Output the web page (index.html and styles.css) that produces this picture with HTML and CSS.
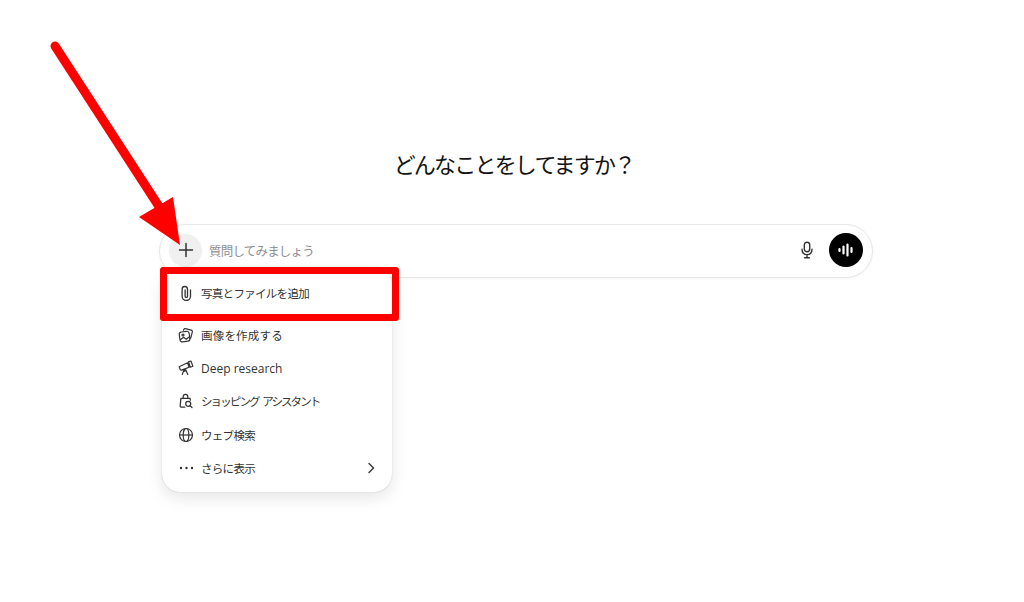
FILE: index.html
```html
<!DOCTYPE html>
<html lang="ja">
<head>
<meta charset="utf-8">
<title>ChatGPT</title>
<link rel="stylesheet" href="styles.css">
</head>
<body>
<main class="page">
  <h1 class="title">どんなことをしてますか？</h1>
  <div class="composer-wrap">
    <div class="composer">
      <button class="plus" aria-label="追加">
        <svg width="16" height="16" viewBox="0 0 16 16"><path d="M8 1.500v13M1.500 8h13" stroke="#333" stroke-width="1.5" fill="none" stroke-linecap="round"/></svg>
      </button>
      <span class="placeholder">質問してみましょう</span>
      <svg class="mic" width="16" height="18" viewBox="0 0 16 18" fill="none" stroke="#333" stroke-width="1.4" stroke-linecap="round"><rect x="5.300" y="1.200" width="5.400" height="9.600" rx="2.700"/><path d="M3 8.200c0 3.200 2 5.400 5 5.400s5-2.200 5-5.400M8 13.600v3M5.600 16.700h4.800"/></svg>
      <button class="voice" aria-label="音声">
        <svg width="18" height="14" viewBox="0 0 18 14" stroke="#fff" stroke-width="2.200" stroke-linecap="round"><path d="M2.500 6v2M6.500 3.500v7M10.500 1.500v11M14.500 5v4"/></svg>
      </button>
    </div>
    <nav class="menu">
      <a class="item item-first">
        <svg class="ico" viewBox="0 0 16 16" fill="none" stroke="#333" stroke-width="1.300" stroke-linecap="round"><path d="M12.500 5v6.300a4.200 4.200 0 0 1-8.400 0V4.200a2.700 2.700 0 0 1 5.400 0v7a1.200 1.200 0 0 1-2.400 0V5"/></svg>
        <span class="t-tight">写真とファイルを追加</span>
      </a>
      <a class="item">
        <svg class="ico" viewBox="0 0 16 16" fill="none" stroke="#333" stroke-width="1.200" stroke-linejoin="round" stroke-linecap="round"><rect x="1.600" y="4.600" width="10" height="10" rx="2.400" transform="rotate(-8 6.600 9.600)"/><path d="M5.400 3.300l.4-.9c.3-.6.9-.9 1.500-.7l6 1.500c.8.2 1.200.9 1 1.600l-1.300 5.500c-.2.700-.7 1.100-1.300 1.100"/><circle cx="5" cy="8" r="1"/><path d="M2.600 12.500l3-2.300 2.600 2 2.500-2"/></svg>
        <span class="t-wide">画像を作成する</span>
      </a>
      <a class="item">
        <svg class="ico" viewBox="0 0 16 16" fill="none" stroke="#333" stroke-width="1.200" stroke-linejoin="round" stroke-linecap="round"><path d="M1.200 6.800l8.400-4 1.500 4.400-7.600 2.900c-.6.200-1 0-1.200-.4zM10.500 1.900l2.400-.9 2 5.200-2.600 1-1.800-5.300zM6.400 9.100l-2.200 5.400M7.300 8.800l2.500 5.600M6.800 9.500v2"/></svg>
        <span class="latin">Deep research</span>
      </a>
      <a class="item">
        <svg class="ico" viewBox="0 0 16 16" fill="none" stroke="#333" stroke-width="1.250" stroke-linecap="round" stroke-linejoin="round"><path d="M6.800 14.200H3.600c-.9 0-1.500-.7-1.400-1.600l.7-7.200h9.200l.2 1.800M5.200 5.400V3.600a2.300 2.300 0 0 1 4.600 0v1.800"/><circle cx="10.200" cy="10.800" r="2.500"/><path d="M12.100 12.700l1.900 1.800"/></svg>
        <span class="t-shop">ショッピング アシスタント</span>
      </a>
      <a class="item">
        <svg class="ico" viewBox="0 0 16 16" fill="none" stroke="#333" stroke-width="1.200"><circle cx="8" cy="8" r="6.500"/><ellipse cx="8" cy="8" rx="2.800" ry="6.500"/><path d="M1.500 8h13"/></svg>
        <span class="t-tight">ウェブ検索</span>
      </a>
      <a class="item">
        <svg class="ico" viewBox="0 0 16 16" fill="#333"><circle cx="3" cy="8" r="1.200"/><circle cx="8.500" cy="8" r="1.200"/><circle cx="14" cy="8" r="1.200"/></svg>
        <span class="grow t-tight">さらに表示</span>
        <svg class="chev" width="8" height="12" viewBox="0 0 8 12" fill="none" stroke="#333" stroke-width="1.400" stroke-linecap="round" stroke-linejoin="round"><path d="M2 1.500L6.500 6 2 10.500"/></svg>
      </a>
    </nav>
    <div class="highlight"></div>
  </div>
</main>
<svg class="arrow" width="200" height="260" viewBox="0 0 200 260">
  <path d="M55 46L160 208" stroke="#fe0000" stroke-width="9" stroke-linecap="round" fill="none"/>
  <path d="M173 197L139 217L180 245Z" fill="#fe0000"/>
</svg>
</body>
</html>
```
FILE: styles.css
```css
* { box-sizing: border-box; }
html, body { margin: 0; height: 100%; background: #fff; overflow: hidden; }
body {
  font-family: "Noto Sans CJK JP", "Noto Sans", sans-serif;
  color: #303030;
  position: relative;
}
.page {
  display: flex;
  flex-direction: column;
  align-items: flex-start;
  padding: 147px 0 0 159px;
}
.title {
  margin: 0;
  width: 710px;
  height: 32px;
  line-height: 32px;
  text-align: center;
  font-size: 22px;
  letter-spacing: -1.8px;
  font-weight: 400;
  color: #141414;
}
.composer-wrap {
  position: relative;
  margin-top: 45px;
  width: 714px;
}
.composer {
  height: 54px;
  border: 1px solid #e6e6e6;
  border-radius: 27px;
  background: #fff;
  box-shadow: 0 1px 3px rgba(0, 0, 0, 0.04);
  display: flex;
  align-items: center;
  padding: 0 9px 2px 9px;
}
.plus {
  width: 33px;
  height: 33px;
  border: 0;
  border-radius: 50%;
  background: #f0f0f0;
  padding: 0;
  display: flex;
  align-items: center;
  justify-content: center;
  flex: none;
}
.placeholder {
  flex: 1;
  margin-left: 7px;
  font-size: 12.500px;
  letter-spacing: -0.8px;
  color: #8f8f8f;
}
.mic { flex: none; margin-right: 14px; }
.voice {
  width: 34px;
  height: 34px;
  border: 0;
  border-radius: 50%;
  background: #000;
  padding: 0;
  display: flex;
  align-items: center;
  justify-content: center;
  flex: none;
}
.menu {
  position: absolute;
  left: 3px;
  top: 43px;
  width: 230px;
  height: 225px;
  background: #fff;
  border-radius: 18px;
  box-shadow: 0 0 1px rgba(0, 0, 0, 0.3), 0 6px 16px rgba(0, 0, 0, 0.1);
  padding: 9px 0 0 16px;
  display: flex;
  flex-direction: column;
}
.item {
  height: 33.400px;
  display: flex;
  align-items: center;
  gap: 7px;
  font-size: 11.500px;
  color: #333;
  padding-right: 17px;
}
.item-first { margin-bottom: 8px; height: 34px; }
.ico { width: 16px; height: 16px; flex: none; }
.t-tight { letter-spacing: -0.7px; }
.t-wide { letter-spacing: 0.2px; }
.t-shop { letter-spacing: -1.900px; word-spacing: 3px; }
.latin { font-family: "Open Sans", sans-serif; font-size: 12px; }
.grow { flex: 1; }
.chev { flex: none; }
.highlight {
  position: absolute;
  left: 1px;
  top: 43px;
  width: 239px;
  height: 54px;
  border: 7px solid #fe0000;
  border-radius: 3px;
}
.arrow {
  position: absolute;
  left: 0;
  top: 0;
  pointer-events: none;
}
```
